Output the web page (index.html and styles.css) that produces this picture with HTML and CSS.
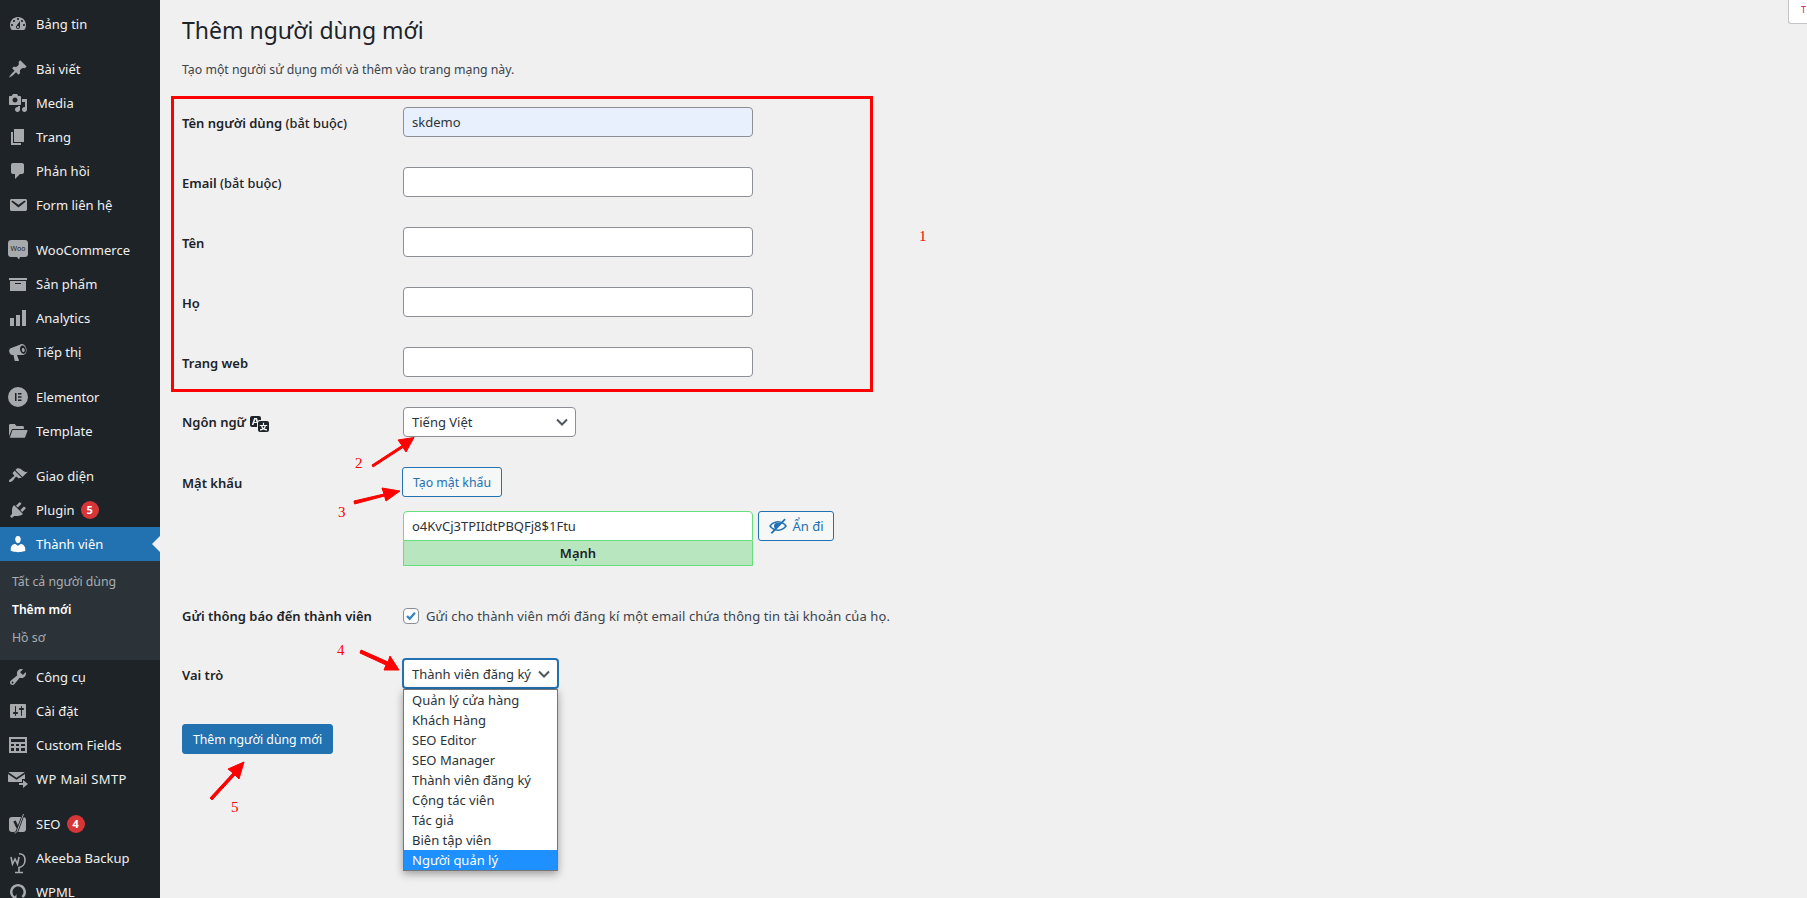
FILE: index.html
```html
<!DOCTYPE html>
<html lang="vi">
<head>
<meta charset="utf-8">
<title>Thêm người dùng mới</title>
<link rel="stylesheet" href="styles.css">
</head>
<body>
<aside class="sidebar">
  <a class="item"><svg class="ico" viewBox="0 0 20 20"><path d="M3.76 16h12.48c1.1-1.37 1.76-3.11 1.76-5 0-4.42-3.58-8-8-8s-8 3.58-8 8c0 1.89.66 3.63 1.76 5zM10 4c.55 0 1 .45 1 1s-.45 1-1 1-1-.45-1-1 .45-1 1-1zM6 6c.55 0 1 .45 1 1s-.45 1-1 1-1-.45-1-1 .45-1 1-1zm8 0c.55 0 1 .45 1 1s-.45 1-1 1-1-.45-1-1 .45-1 1-1zm-5.37 5.55L12 7v6c0 1.1-.9 2-2 2s-2-.9-2-2c0-.57.24-1.08.63-1.45zM4 10c.55 0 1 .45 1 1s-.45 1-1 1-1-.45-1-1 .45-1 1-1zm12 0c.55 0 1 .45 1 1s-.45 1-1 1-1-.45-1-1 .45-1 1-1zm-5 3c0-.55-.45-1-1-1s-1 .45-1 1 .45 1 1 1 1-.45 1-1z"/></svg><span>Bảng tin</span></a>
  <div class="sep"></div>
  <a class="item"><svg class="ico" viewBox="0 0 20 20"><path d="M10.44 3.02l1.82-1.82 6.36 6.35-1.83 1.82c-1.05-.68-2.48-.57-3.41.36l-.75.75c-.92.93-1.04 2.35-.35 3.41l-1.83 1.82-2.41-2.41-2.8 2.79c-.42.42-3.38 2.71-3.8 2.29s1.86-3.39 2.28-3.81l2.79-2.79L4.1 9.36l1.83-1.82c1.05.69 2.48.57 3.4-.36l.75-.75c.93-.92 1.05-2.35.36-3.41z"/></svg><span>Bài viết</span></a>
  <a class="item"><svg class="ico" viewBox="0 0 20 20"><path d="M13 11V4c0-.55-.45-1-1-1h-1.67L9 1H5L3.67 3H2c-.55 0-1 .45-1 1v7c0 .55.45 1 1 1h10c.55 0 1-.45 1-1zM7 4.5c1.38 0 2.5 1.12 2.5 2.5S8.38 9.5 7 9.5 4.5 8.38 4.5 7 5.62 4.5 7 4.5zM14 6h5v10.5c0 1.38-1.12 2.5-2.5 2.5S14 17.88 14 16.5s1.12-2.5 2.5-2.5c.17 0 .34.02.5.05V9h-3V6zm-4 8.05V13h2v3.5c0 1.38-1.12 2.5-2.5 2.5S7 17.88 7 16.5 8.12 14 9.5 14c.17 0 .34.02.5.05z"/></svg><span>Media</span></a>
  <a class="item"><svg class="ico" viewBox="0 0 20 20"><path d="M6 15V2h10v13H6zm-1 1h8v2H3V5h2v11z"/></svg><span>Trang</span></a>
  <a class="item"><svg class="ico" viewBox="0 0 20 20"><path d="M5 2h9c1.1 0 2 .9 2 2v7c0 1.1-.9 2-2 2h-2l-5 5v-5H5c-1.1 0-2-.9-2-2V4c0-1.1.9-2 2-2z"/></svg><span>Phản hồi</span></a>
  <a class="item"><svg class="ico" viewBox="0 0 20 20"><path d="M3.87 4h13.25C18.37 4 19 4.59 19 5.79v8.42c0 1.19-.63 1.79-1.88 1.79H3.87c-1.25 0-1.88-.6-1.88-1.79V5.79c0-1.2.63-1.79 1.88-1.79zm6.62 8.6l6.74-5.53c.24-.2.43-.66.13-1.07-.29-.41-.82-.42-1.17-.17l-5.7 3.86L4.8 5.83c-.35-.25-.88-.24-1.17.17-.3.41-.11.87.13 1.07z"/></svg><span>Form liên hệ</span></a>
  <div class="sep"></div>
  <a class="item"><svg class="ico" viewBox="0 0 20 20"><path d="M3 0h14c1.700 0 3 1.300 3 3v11c0 1.700-1.300 3-3 3h-5l-1 2.500-2-2.500H3c-1.700 0-3-1.300-3-3V3c0-1.700 1.300-3 3-3z"/><text class="woo" x="10" y="11" text-anchor="middle">Woo</text></svg><span>WooCommerce</span></a>
  <a class="item"><svg class="ico" viewBox="0 0 20 20"><path d="M19 4v2H1V4h18zM2 7h16v10H2V7zm11 3V9H7v1h6z"/></svg><span>Sản phẩm</span></a>
  <a class="item"><svg class="ico" viewBox="0 0 20 20"><path d="M18 18V2h-4v16h4zm-6 0V7H8v11h4zm-6 0v-8H2v8h4z"/></svg><span>Analytics</span></a>
  <a class="item"><svg class="ico" viewBox="0 0 20 20"><path fill-rule="evenodd" d="M13.5 2c2.400-.6 4.300 2.200 4.800 4.600.6 2.600-.1 5.600-2.300 6.200-.3.1-.5.1-.8.1H9l2 5.600c0 .3-.2.5-.5.5H7.200c-.3 0-.5-.2-.6-.5L5.500 13H4.300c-1.200 0-2.500-1-3-3-.4-1.700.2-3.300 1.300-3.800l9.300-3.500c.5-.3 1-.6 1.600-.7zm.5 1.500c-1.600.4-2.400 2.500-1.800 4.800.6 2.300 2.200 3.800 3.800 3.400 1.600-.4 2.400-2.500 1.800-4.800-.6-2.300-2.200-3.800-3.800-3.400zm.8 2.500c.8-.2 1.500.5 1.800 1.600s0 2.200-.8 2.400-1.500-.5-1.800-1.600 0-2.200.8-2.400z"/></svg><span>Tiếp thị</span></a>
  <div class="sep"></div>
  <a class="item"><svg class="ico" viewBox="0 0 20 20"><path fill-rule="evenodd" d="M10 0a10 10 0 1 0 0 20 10 10 0 0 0 0-20zM7 6h1.500v8H7zm3 0h3.500v1.500H10zm0 3.200h3.500v1.600H10zm0 3.300h3.500V14H10z"/></svg><span>Elementor</span></a>
  <a class="item"><svg class="ico" viewBox="0 0 20 20"><path d="M1 4.500C1 3.700 1.600 3 2.400 3h4.300l1.800 2h6.100c.7 0 1.300.6 1.300 1.300V8H5.200c-.8 0-1.500.5-1.800 1.200L1 15.200V4.500zM5 9h13.700c.6 0 1 .6.8 1.100l-2.300 5.800c-.2.6-.7.9-1.300.9H1.800l2.400-7.100C4.300 9.300 4.600 9 5 9z"/></svg><span>Template</span></a>
  <div class="sep"></div>
  <a class="item"><svg class="ico" viewBox="0 0 20 20"><path d="M14.48 11.060L7.41 3.990l1.500-1.500c.5-.56 2.300-.47 3.510.32 1.210.8 1.430 1.280 2.910 2.100 1.180.64 2.450 1.260 4.450.85zm-.71.71L6.700 4.700 4.930 6.470c-.39.39-.39 1.020 0 1.410l1.060 1.060c.39.39.39 1.030 0 1.420-.6.6-1.430 1.110-2.210 1.690-.35.26-.7.53-1.010.84C1.430 13.230.4 14.850 1.200 15.800c.78.78 2.620-.18 3.930-1.550.3-.31.58-.66.84-1.010.58-.78 1.090-1.610 1.690-2.210.39-.39 1.030-.39 1.420 0l1.060 1.060c.39.39 1.020.39 1.410 0z"/></svg><span>Giao diện</span></a>
  <a class="item"><svg class="ico" viewBox="0 0 20 20"><path d="M13.110 4.360L9.870 7.600 8 5.730l3.240-3.240c.35-.34 1.050-.2 1.560.32.52.51.66 1.210.31 1.550zm-8 1.770l.91-1.120 9.010 9.010-1.190.84c-.71.71-2.630 1.160-3.820 1.160H6.140L4.900 17.260c-.59.59-1.540.59-2.120 0-.59-.58-.59-1.530 0-2.120l1.240-1.240v-3.880c0-1.130.4-3.190 1.090-3.890zm7.260 3.970l3.240-3.240c.34-.35 1.040-.21 1.550.31.52.51.66 1.210.31 1.550l-3.240 3.250z"/></svg><span>Plugin</span><b class="badge">5</b></a>
  <a class="item current"><svg class="ico" viewBox="0 0 20 20"><path d="M10 9.250c-2.270 0-2.730-3.440-2.730-3.440C7 4.020 7.820 2 9.970 2c2.160 0 2.980 2.020 2.710 3.810 0 0-.41 3.440-2.680 3.440zm0 2.570L12.720 10c2.390 0 4.520 2.330 4.520 4.530v2.490s-3.650 1.130-7.240 1.130c-3.650 0-7.240-1.130-7.240-1.130v-2.490c0-2.250 1.940-4.480 4.470-4.480z"/></svg><span>Thành viên</span></a>
  <div class="submenu">
    <a class="subitem">Tất cả người dùng</a>
    <a class="subitem active">Thêm mới</a>
    <a class="subitem">Hồ sơ</a>
  </div>
  <a class="item"><svg class="ico" viewBox="0 0 20 20"><path d="M16.680 9.770c-1.340 1.340-3.300 1.670-4.950.99l-5.410 6.520c-.99.99-2.590.99-3.580 0s-.99-2.590 0-3.570l6.520-5.420c-.68-1.650-.35-3.610.99-4.950 1.280-1.280 3.120-1.620 4.720-1.060l-2.890 2.890 2.820 2.820 2.860-2.870c.53 1.580.18 3.390-1.080 4.650zM3.810 16.210c.4.39 1.040.39 1.430 0 .4-.4.4-1.040 0-1.430-.39-.4-1.030-.4-1.430 0-.39.39-.39 1.030 0 1.430z"/></svg><span>Công cụ</span></a>
  <a class="item"><svg class="ico" viewBox="0 0 20 20"><path d="M18 16V4c0-.55-.45-1-1-1H3c-.55 0-1 .45-1 1v12c0 .55.45 1 1 1h14c.55 0 1-.45 1-1zM8 11h1c.55 0 1 .45 1 1s-.45 1-1 1H8v1.500c0 .28-.22.5-.5.5s-.5-.22-.5-.5V13H6c-.55 0-1-.45-1-1s.45-1 1-1h1V5.500c0-.28.22-.5.5-.5s.5.22.5.5V11zm5-2h-1c-.55 0-1-.45-1-1s.45-1 1-1h1V5.500c0-.28.22-.5.5-.5s.5.22.5.5V7h1c.55 0 1 .45 1 1s-.45 1-1 1h-1v5.500c0 .28-.22.5-.5.5s-.5-.22-.5-.5V9z"/></svg><span>Cài đặt</span></a>
  <a class="item"><svg class="ico" viewBox="0 0 20 20"><path fill-rule="evenodd" d="M1 2h18v16H1zM3 4v3h14V4zm0 5v2h3V9zm5 0v2h3V9zm5 0v2h4V9zM3 13v3h3v-3zm5 0v3h3v-3zm5 0v3h4v-3z"/></svg><span>Custom Fields</span></a>
  <a class="item"><svg class="ico" viewBox="0 0 20 20"><path d="M1 3h15c.3 0 .5.1.6.3L8.500 8.800.5 3.300C.6 3.100.8 3 1 3zM0 5l8.500 5.800L17 5v5h-3v3H1c-.6 0-1-.4-1-1zM15 11l5 4-5 4v-3h-4v-2h4z"/></svg><span class="wide">WP Mail SMTP</span></a>
  <div class="sep"></div>
  <a class="item"><svg class="ico" viewBox="0 0 20 20"><rect x="1" y="3" width="17" height="15" rx="3"/><path class="y-dark" d="M6.500 7l3 6.500"/><path class="y-dark" d="M15.500 0L9 17.500c-.5 1-1.500 1.500-2.500 1.500"/><path class="y-light" d="M15.500 0L9 17.500c-.5 1-1.500 1.500-2.500 1.500"/></svg><span>SEO</span><b class="badge">4</b></a>
  <a class="item"><svg class="ico low" viewBox="0 0 20 20"><path class="aki" d="M3 4l1.500 7L7 6l2.500 5L11 4"/><path class="aki" d="M11 .8c4 0 6 2.700 6 6.200 0 4-2.500 7-6 7.500V19.500M7 19.500h8"/></svg><span>Akeeba Backup</span></a>
  <a class="item"><svg class="ico" viewBox="0 0 20 20"><path d="M10 2c4.400 0 8 3.600 8 8 0 2.500-1 4.500-3 6l-1.500-2c1.200-1 2-2.400 2-4 0-3-2.400-5.500-5.500-5.500S4.500 7 4.500 10c0 2 1 3.600 2.500 4.600L8.500 12v6l-4.500-.5 1.200-1.500C3.200 14.500 2 12.400 2 10c0-4.400 3.600-8 8-8z"/></svg><span>WPML</span></a>
</aside>

<main class="main">
  <h1 class="title">Thêm người dùng mới</h1>
  <p class="desc">Tạo một người sử dụng mới và thêm vào trang mạng này.</p>

  <div class="redbox">
    <div class="row"><label class="lab">Tên người dùng <small>(bắt buộc)</small></label><input class="field filled" value="skdemo"></div>
    <div class="row"><label class="lab">Email <small>(bắt buộc)</small></label><input class="field"></div>
    <div class="row"><label class="lab">Tên</label><input class="field"></div>
    <div class="row"><label class="lab">Họ</label><input class="field"></div>
    <div class="row"><label class="lab">Trang web</label><input class="field"></div>
  </div>

  <div class="row lang-row">
    <label class="lab">Ngôn ngữ <svg class="trans" viewBox="0 0 20 20"><path d="M11 7H9.490c-.63 0-1.250.3-1.590.7L7 5H4.130l-2.390 7h1.690l.74-2H7v4H2c-1.100 0-2-.9-2-2V5c0-1.100.9-2 2-2h7c1.100 0 2 .9 2 2v2zM6.510 9H4.490l1-2.930zM10 8h7c1.100 0 2 .9 2 2v7c0 1.100-.9 2-2 2h-7c-1.100 0-2-.9-2-2v-7c0-1.100.9-2 2-2zm7.250 5v-1.080h-3.170V9.750h-1.160v2.170H9.750V13h1.280c.11.85.56 1.850 1.280 2.620-.87.36-1.890.62-2.310.62-.01.02.22.97.2 1.460.84 0 2.210-.5 3.280-1.150 1.090.65 2.480 1.150 3.340 1.150-.02-.49.2-1.440.2-1.460-.43 0-1.490-.27-2.380-.63.7-.77 1.140-1.770 1.250-2.610h1.360zm-3.810 1.930c-.5-.46-.85-1.130-1.010-1.930h2.090c-.17.8-.51 1.470-1 1.930l-.04.03s-.03-.02-.04-.03z"/></svg></label>
    <div class="select lang"><span>Tiếng Việt</span><svg class="chev" viewBox="0 0 16 16"><path d="M3 5.500l5 5 5-5"/></svg></div>
  </div>

  <div class="row pass-row">
    <label class="lab">Mật khẩu</label>
    <button class="btn gen">Tạo mật khẩu</button>
  </div>

  <div class="pass-wrap">
    <div class="pass-col">
      <input class="field pass" value="o4KvCj3TPIIdtPBQFj8$1Ftu">
      <div class="strength">Mạnh</div>
    </div>
    <button class="btn hide"><svg class="eye" viewBox="0 0 20 20"><path d="M10 5C6 5 3 7.300 1 10c2 2.700 5 5 9 5s7-2.300 9-5c-2-2.700-5-5-9-5zm0 1.500c2.800 0 5.300 1.400 7 3.500-1.700 2.100-4.200 3.500-7 3.500S4.700 12.100 3 10c1.700-2.100 4.200-3.500 7-3.500z"/><path d="M8.300 6.700h4.400L7.300 12.800C6.500 12 6 11 6 10c0-1.500 1-2.800 2.300-3.300z"/><path d="M16.500 2.500l1.200 1.200L4 18l-1.300-1.300z"/></svg>Ẩn đi</button>
  </div>

  <div class="row notify-row">
    <label class="lab plain">Gửi thông báo đến thành viên</label>
    <span class="check"><svg viewBox="0 0 16 16"><path d="M3.500 8l3 3.200 6-7"/></svg></span>
    <span class="check-text">Gửi cho thành viên mới đăng kí một email chứa thông tin tài khoản của họ.</span>
  </div>

  <div class="row role-row">
    <label class="lab">Vai trò</label>
    <div class="role-wrap">
      <div class="select role"><span>Thành viên đăng ký</span><svg class="chev" viewBox="0 0 16 16"><path d="M3 5.500l5 5 5-5"/></svg></div>
      <ul class="menu">
        <li>Quản lý cửa hàng</li>
        <li>Khách Hàng</li>
        <li>SEO Editor</li>
        <li>SEO Manager</li>
        <li>Thành viên đăng ký</li>
        <li>Cộng tác viên</li>
        <li>Tác giả</li>
        <li>Biên tập viên</li>
        <li class="sel">Người quản lý</li>
      </ul>
    </div>
  </div>

  <button class="btn submit">Thêm người dùng mới</button>
</main>

<svg class="arrows" viewBox="0 0 1807 898">
  <path d="M372 465L402 445.500 398 440 414 437.500 406 452 403 447.500 373 467z"/>
  <path d="M354 501L384 494 382 488 400 491 386 501 384.500 496 354.500 504z"/>
  <path d="M361 650L388 662 390 656 399 670 384 670 386 665 360 653z"/>
  <path d="M210 798L233 773 228 769 244 762 239 779 235 775 212 800z"/>
</svg>
<span class="num n1">1</span>
<span class="num n2">2</span>
<span class="num n3">3</span>
<span class="num n4">4</span>
<span class="num n5">5</span>
<div class="corner">T</div>
</body>
</html>
```
FILE: styles.css
```css
* { box-sizing: border-box; }
html, body { height: 100%; }
body {
  margin: 0;
  display: flex;
  height: 898px;
  overflow: hidden;
  position: relative;
  background: #f0f0f1;
  color: #3c434a;
  font: 13px/18px "Noto Sans", "Open Sans", sans-serif;
}
.sidebar {
  flex: 0 0 160px;
  background: #1d2327;
  padding-top: 7px;
  overflow: hidden;
}
.item {
  display: flex;
  align-items: center;
  height: 34px;
  color: #f0f0f1;
  position: relative;
  flex-shrink: 0;
}
.ico {
  width: 20px;
  height: 20px;
  margin: 0 8px 0 8px;
  fill: #a7aaad;
  flex: none;
  overflow: visible;
}
.low { margin-top: 10px; }
.wide { letter-spacing: .35px; }
.woo { font: 400 7px "Noto Sans", sans-serif; fill: #1d2327; }
.y-dark { fill: none; stroke: #1d2327; stroke-width: 2.6; }
.y-light { fill: none; stroke: #a7aaad; stroke-width: 1; }
.aki { fill: none; stroke: #a7aaad; stroke-width: 1.6; }
.sep { height: 11px; }
.badge {
  width: 18px;
  height: 18px;
  margin-left: 6px;
  border-radius: 50%;
  background: #d63638;
  color: #fff;
  font-size: 11px;
  line-height: 18px;
  text-align: center;
}
.current { background: #2271b1; color: #fff; }
.current .ico { fill: #fff; }
.current::after {
  content: "";
  position: absolute;
  right: 0;
  top: 9px;
  border: 8px solid transparent;
  border-right-color: #f0f0f1;
  border-left: 0;
}
.submenu { background: #2c3338; padding: 7px 0; }
.subitem {
  display: block;
  height: 28.2px;
  padding: 5px 12px;
  font-size: 12.3px;
  line-height: 18.2px;
  color: #a9adb0;
}
.active { color: #fff; font-weight: 600; font-size: 12.1px; }

.main { flex: 1; padding: 15px 0 0 22px; }
.title {
  margin: 0;
  font-size: 23px;
  font-weight: 400;
  line-height: 30px;
  color: #1d2327;
}
.desc { margin: 16px 0 0; font-size: 12.3px; }
.redbox {
  width: 702px;
  margin: 17px 0 0 -11px;
  padding: 8px 0 12px 8px;
  border: 3px solid #f00;
  display: flex;
  flex-direction: column;
  gap: 30px;
}
.row { display: flex; align-items: center; min-height: 30px; }
.lab {
  flex: 0 0 221px;
  padding-top: 2px;
  font-weight: 600;
  color: #1d2327;
  white-space: nowrap;
}
.plain { padding-top: 0; }
.lab small { font-size: 12.8px; font-weight: 500; }
.field {
  width: 350px;
  height: 30px;
  padding: 0 8px;
  border: 1px solid #8c8f94;
  border-radius: 4px;
  background: #fff;
  color: #2c3338;
  font: 13px "Noto Sans", sans-serif;
}
.filled { background: #e8f0fe; }
.lang-row { margin-top: 15px; }
.trans { width: 20px; height: 20px; vertical-align: -6px; margin-left: 1px; fill: #1d2327; }
.select {
  display: flex;
  align-items: center;
  justify-content: space-between;
  height: 30px;
  padding: 0 5px 0 8px;
  background: #fff;
  border: 1px solid #8c8f94;
  border-radius: 4px;
  color: #2c3338;
}
.lang { width: 173px; }
.chev { width: 16px; height: 16px; flex: none; fill: none; stroke: #50575e; stroke-width: 2; }
.pass-row { margin-top: 30px; }
.btn {
  font: 12.3px "Noto Sans", sans-serif;
  border-radius: 3px;
  cursor: pointer;
}
.gen {
  width: 100px;
  height: 30px;
  margin-left: -1px;
  padding: 0;
  background: #f6f7f7;
  border: 1px solid #2271b1;
  color: #2271b1;
}
.pass-wrap { display: flex; gap: 5px; margin: 14px 0 0 221px; align-items: flex-start; }
.pass-col { width: 350px; }
.pass { display: block; border-color: #68de7c; border-radius: 4px 4px 0 0; }
.strength {
  height: 25px;
  background: #b8e6bf;
  border: 1px solid #68de7c;
  border-top: 0;
  color: #1d2327;
  font-weight: 600;
  line-height: 24px;
  text-align: center;
}
.hide {
  width: 76px;
  height: 30px;
  padding: 0;
  display: flex;
  align-items: center;
  justify-content: center;
  gap: 4px;
  font-size: 13px;
  background: #f6f7f7;
  border: 1px solid #2271b1;
  color: #2271b1;
}
.eye { width: 20px; height: 20px; fill: #2271b1; }
.notify-row { min-height: 20px; margin-top: 40px; }
.check {
  width: 16px;
  height: 16px;
  margin-right: 7px;
  background: #fff;
  border: 1px solid #8c8f94;
  border-radius: 4px;
  display: flex;
}
.check svg { fill: none; stroke: #3582c4; stroke-width: 2.6; }
.check-text { letter-spacing: .1px; }
.role-row { margin-top: 32px; }
.role-wrap { position: relative; margin-left: -1px; }
.role {
  width: 157px;
  height: 31px;
  padding: 0 5px 0 8px;
  border: 2px solid #2271b1;
  white-space: nowrap;
}
.menu {
  position: absolute;
  top: 31px;
  left: 1px;
  width: 155px;
  margin: 0;
  padding: 0;
  list-style: none;
  background: #fff;
  border: 1px solid #767676;
  box-shadow: 0 3px 8px rgba(0, 0, 0, .35);
  color: #2c3338;
}
.menu li { height: 20px; line-height: 20px; padding-left: 8px; white-space: nowrap; }
.menu .sel { background: #1e90ff; color: #fff; }
.submit {
  display: block;
  width: 151px;
  height: 30px;
  margin-top: 35px;
  padding: 0;
  background: #2271b1;
  border: 1px solid #2271b1;
  color: #fff;
}
.arrows {
  position: absolute;
  left: 0;
  top: 0;
  width: 1807px;
  height: 898px;
  pointer-events: none;
  fill: #f00;
  stroke: #f00;
  stroke-width: 1;
}
.num { position: absolute; color: #f00; font: 15px/16px "Liberation Serif", serif; }
.n1 { left: 919px; top: 228px; }
.n2 { left: 355px; top: 455px; }
.n3 { left: 338px; top: 504px; }
.n4 { left: 337px; top: 642px; }
.n5 { left: 231px; top: 799px; }
.corner {
  position: absolute;
  right: 0;
  top: 0;
  width: 19px;
  height: 24px;
  padding: 4px 0 0 12px;
  background: #fff;
  border: 1px solid #c3c4c7;
  border-width: 0 0 1px 1px;
  border-radius: 0 0 0 3px;
  font-size: 9px;
  line-height: 12px;
  overflow: hidden;
  color: #b25;
}
```
